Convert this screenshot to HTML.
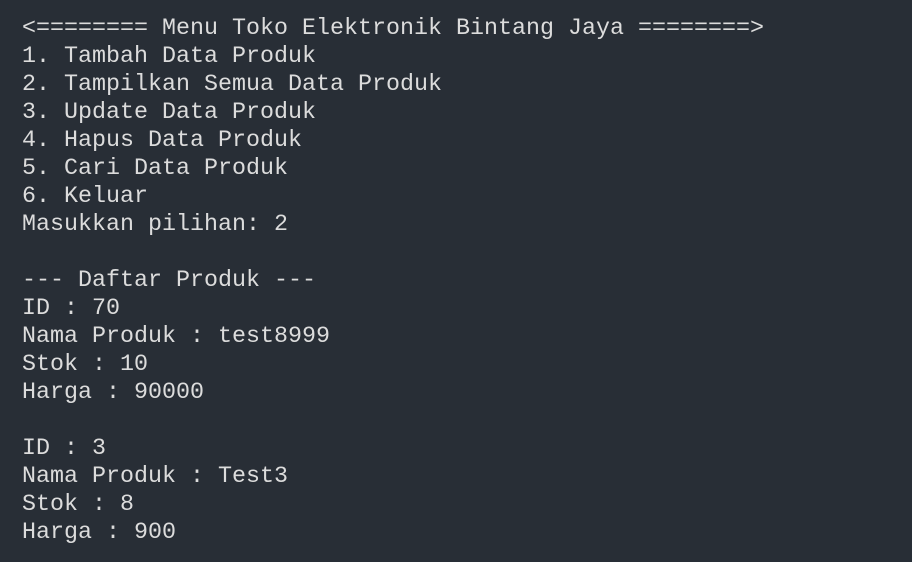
<!DOCTYPE html>
<html><head><meta charset="utf-8"><style>
html,body{margin:0;padding:0;background:#282e36;width:912px;height:562px;overflow:hidden}
pre{margin:0;padding:15px 0 0 22px;font-family:"Liberation Mono",monospace;font-size:23.33px;line-height:28px;color:#dcdcdc;white-space:pre}
</style></head><body><pre>&lt;======== Menu Toko Elektronik Bintang Jaya ========&gt;
1. Tambah Data Produk
2. Tampilkan Semua Data Produk
3. Update Data Produk
4. Hapus Data Produk
5. Cari Data Produk
6. Keluar
Masukkan pilihan: 2

--- Daftar Produk ---
ID : 70
Nama Produk : test8999
Stok : 10
Harga : 90000

ID : 3
Nama Produk : Test3
Stok : 8
Harga : 900</pre></body></html>
